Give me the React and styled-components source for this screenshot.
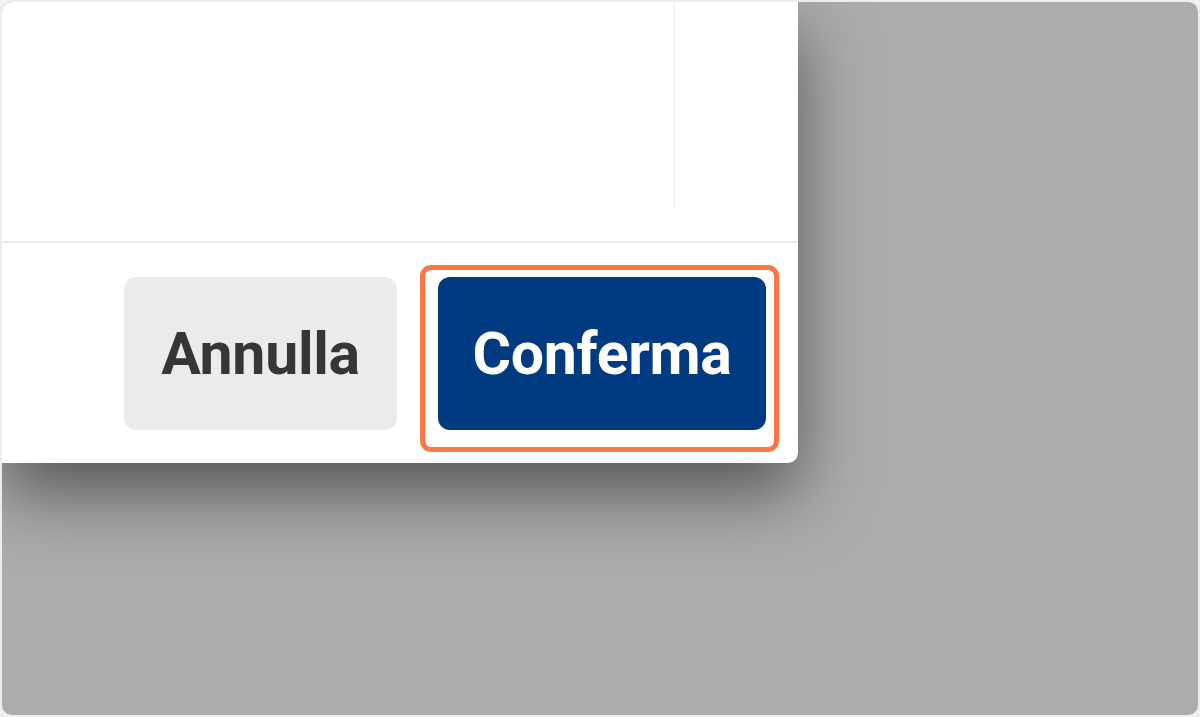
import React from "react";
import styled, { createGlobalStyle } from "styled-components";

const GlobalStyle = createGlobalStyle`
  html, body {
    margin: 0;
    padding: 0;
    background: #f0f0f5;
  }
  body {
    font-family: 'Roboto', 'Liberation Sans', sans-serif;
  }
`;

// ----- Styled Components -----
const Frame = styled.div`
  box-sizing: border-box;
  width: 1200px;
  height: 717px;
  border: 2px solid #ececf2;
  border-radius: 12px;
  background: #acacac;
  overflow: hidden;
`;

const Modal = styled.div`
  width: 796px;
  background: #ffffff;
  border-bottom-right-radius: 10px;
  box-shadow: 0 30px 70px rgba(0, 0, 0, 0.5);
  display: flex;
  flex-direction: column;
`;

const Body = styled.div`
  height: 239px;
  display: flex;
`;

const Pane = styled.div`
  width: 671px;
  height: 206px;
  border-right: 2px solid #f3f3f5;
`;

const Divider = styled.div`
  height: 2px;
  background: #ebebeb;
`;

const Footer = styled.div`
  display: flex;
  justify-content: flex-end;
  align-items: center;
  gap: 41px;
  padding: 34px 32px 33px 0;
`;

const Button = styled.button`
  position: relative;
  box-sizing: border-box;
  width: ${p => p.$width}px;
  height: 153px;
  border: none;
  border-radius: 12px;
  background: ${p => (p.$primary ? "#003a80" : "#ebebeb")};
  color: ${p => (p.$primary ? "#ffffff" : "#363636")};
  font-family: 'Roboto', 'Liberation Sans', sans-serif;
  font-weight: 700;
  font-size: 59px;
  letter-spacing: -0.3px;
  cursor: pointer;
  padding: 0;
`;

// orange highlight drawn over the primary action
const Highlight = styled.span`
  position: absolute;
  left: -18px;
  top: -12px;
  right: -13px;
  bottom: -22px;
  border: 5px solid #ff7644;
  border-radius: 11px;
  pointer-events: none;
`;

function App() {
  return (
    <>
      <GlobalStyle />
      <Frame>
        <Modal>
          <Body>
            <Pane />
          </Body>
          <Divider />
          <Footer>
            <Button $width={273}>Annulla</Button>
            <Button $width={328} $primary>
              Conferma
              <Highlight />
            </Button>
          </Footer>
        </Modal>
      </Frame>
    </>
  );
}

export default App;
